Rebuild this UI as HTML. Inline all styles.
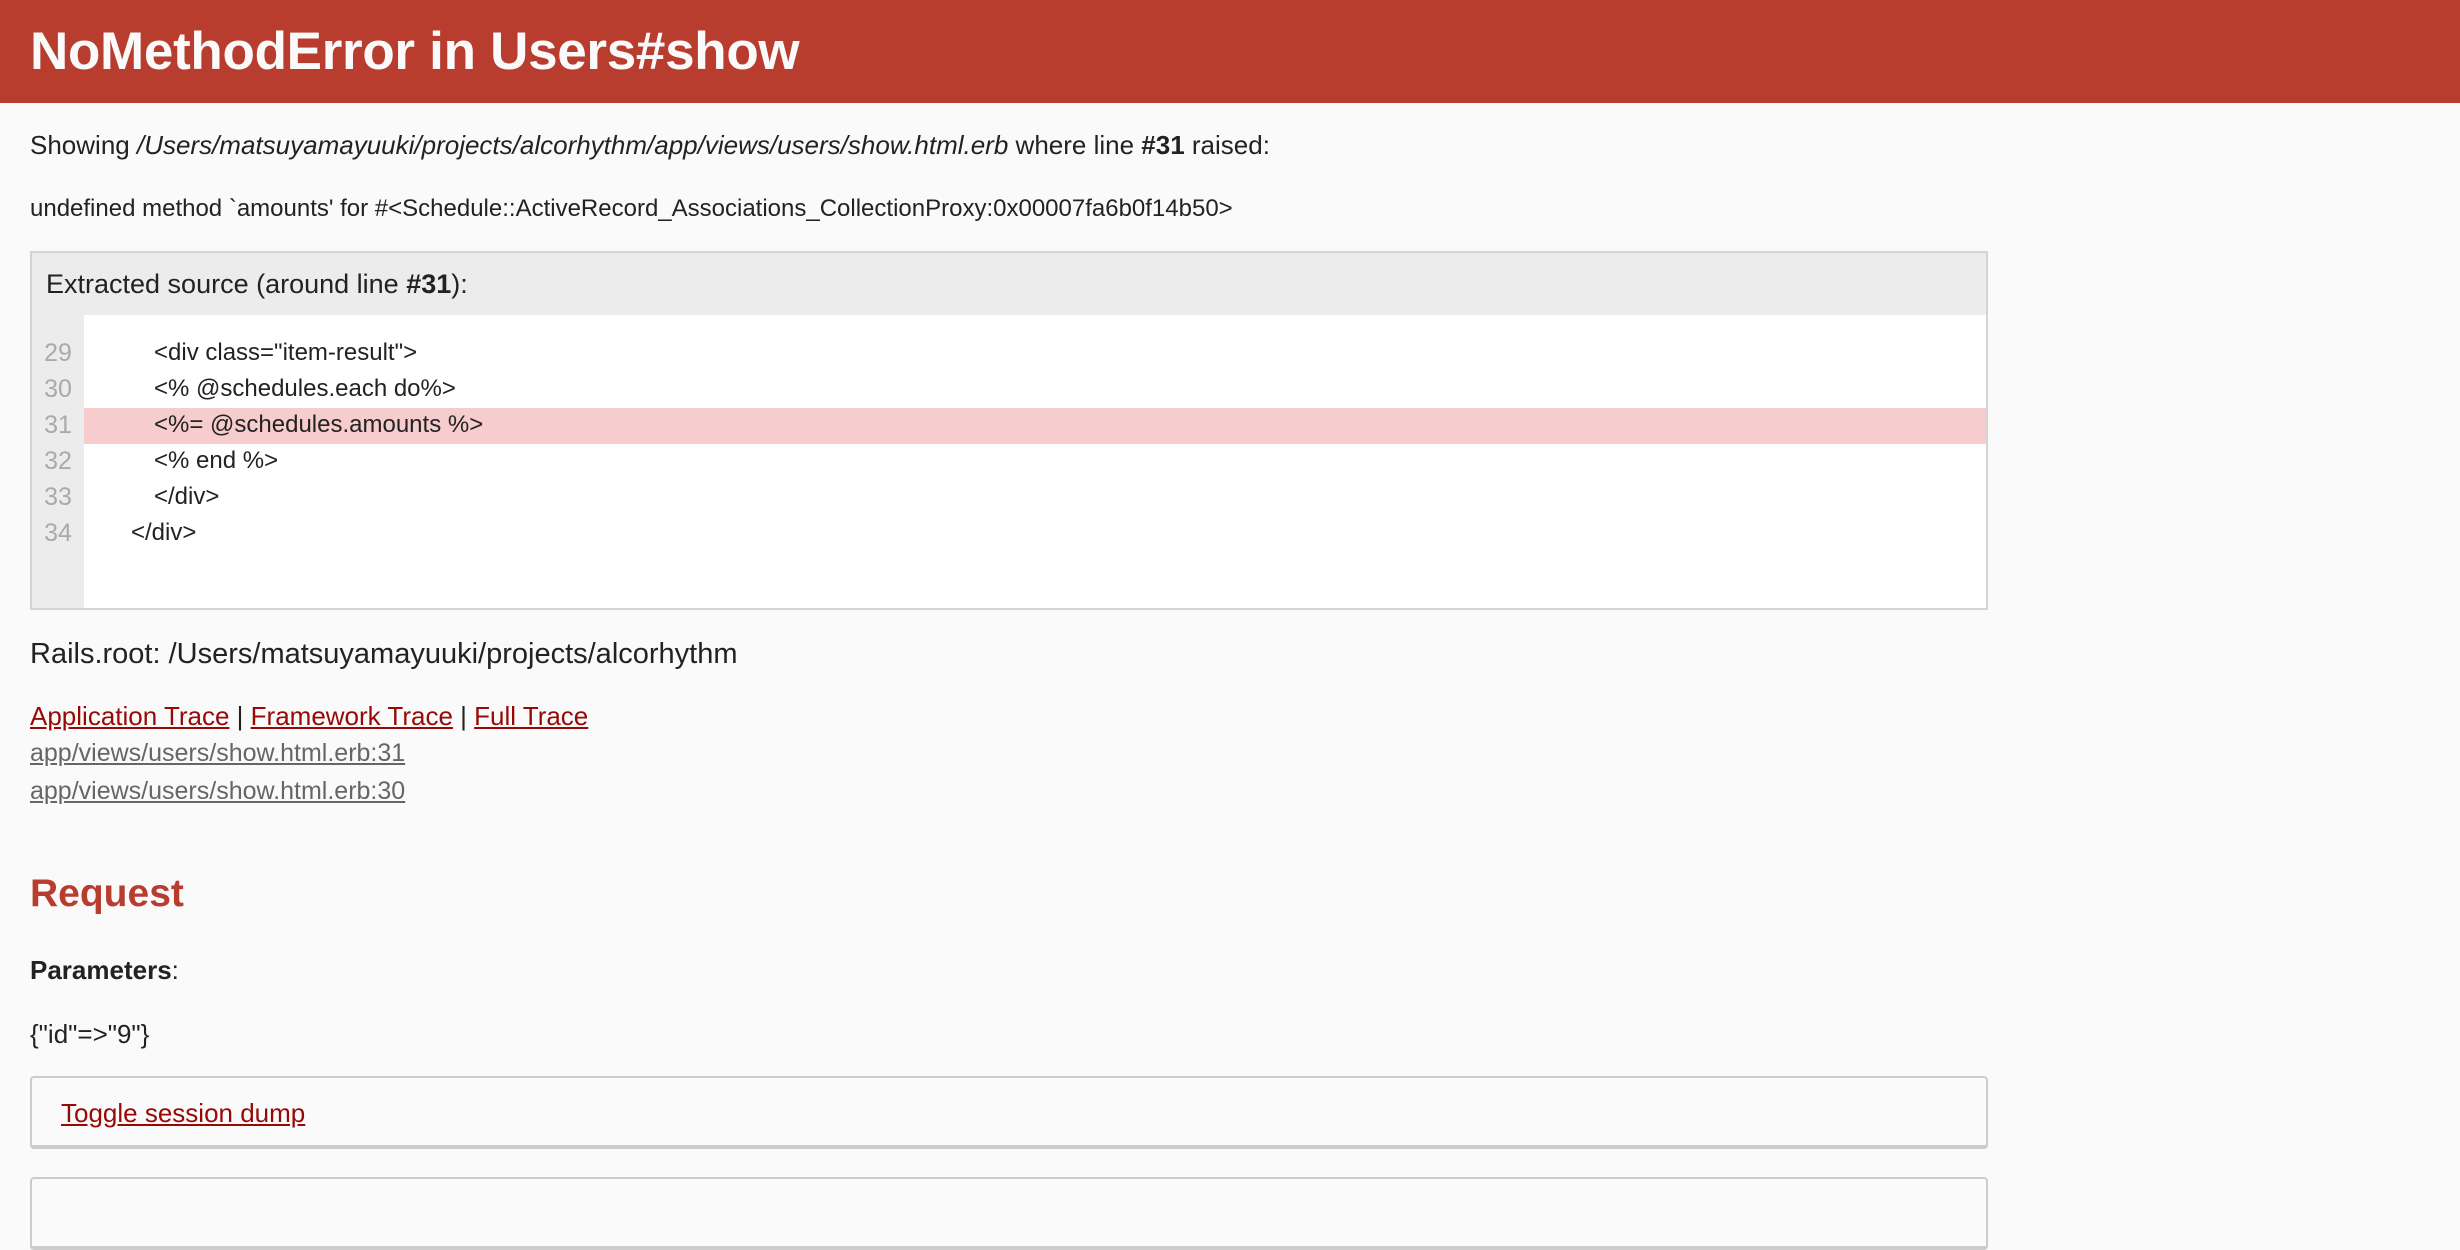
<!DOCTYPE html>
<html><head><meta charset="utf-8"><style>
*{margin:0;padding:0;box-sizing:border-box}
html,body{width:2460px;height:1200px;overflow:hidden;background:#fafafa;font-family:"Liberation Sans",Arial,sans-serif;color:#222}
header{height:103px;background:#b83d2f;color:#fafafa}
header h1{font-size:53px;font-weight:bold;padding-left:30px;line-height:103px;letter-spacing:-0.3px}
.abs{position:absolute;left:30px;white-space:nowrap}
.box{position:absolute;left:30px;top:251px;width:1958px;height:359px;border:2px solid #d4d4d4;background:#fff}
.box .hd{height:62px;background:#ececec;font-size:27px;line-height:62px;padding-left:14px}
.gut{position:absolute;left:0;top:62px;width:52px;bottom:0;background:#ececec}
.ln{position:absolute;left:0;width:52px;text-align:center;color:#aaa;font-size:25px;line-height:36px}
.cl{position:absolute;left:52px;right:0;font-size:24px;line-height:36px;white-space:pre;color:#222}
.hl{background:#f7cccc;height:36px}
a{color:#980905;text-decoration:underline}
.grey{color:#666}
.tog{position:absolute;left:30px;top:1076px;width:1958px;height:73px;border:2px solid #ccc;border-bottom-width:4px;border-radius:4px;background:#fafafa}
</style></head><body>
<header><h1>NoMethodError in Users#show</h1></header>
<div class="abs" style="top:130px;font-size:26px">Showing <i>/Users/matsuyamayuuki/projects/alcorhythm/app/views/users/show.html.erb</i> where line <b>#31</b> raised:</div>
<div class="abs" style="top:195px;font-size:24px">undefined method `amounts' for #&lt;Schedule::ActiveRecord_Associations_CollectionProxy:0x00007fa6b0f14b50&gt;</div>
<div class="box">
<div class="hd">Extracted source (around line <b>#31</b>):</div>
<div class="gut"></div>
</div>
<div style="position:absolute;left:30px;top:251px;width:1958px;height:359px">
<div class="ln" style="top:84px;left:2px">29</div>
<div class="ln" style="top:120px;left:2px">30</div>
<div class="hl" style="position:absolute;top:157px;left:54px;right:2px"></div>
<div class="ln" style="top:156px;left:2px">31</div>
<div class="ln" style="top:192px;left:2px">32</div>
<div class="ln" style="top:228px;left:2px">33</div>
<div class="ln" style="top:264px;left:2px">34</div>
<div class="cl" style="top:84px;left:124px">&lt;div class="item-result"&gt;</div>
<div class="cl" style="top:120px;left:124px">&lt;% @schedules.each do%&gt;</div>
<div class="cl" style="top:156px;left:124px">&lt;%= @schedules.amounts %&gt;</div>
<div class="cl" style="top:192px;left:124px">&lt;% end %&gt;</div>
<div class="cl" style="top:228px;left:124px">&lt;/div&gt;</div>
<div class="cl" style="top:264px;left:101px">&lt;/div&gt;</div>
</div>
<div class="abs" style="top:638px;font-size:29px">Rails.root: /Users/matsuyamayuuki/projects/alcorhythm</div>
<div class="abs" style="top:701px;font-size:26px"><a>Application Trace</a> | <a>Framework Trace</a> | <a>Full Trace</a></div>
<div class="abs" style="top:739px;font-size:25px"><a class="grey">app/views/users/show.html.erb:31</a></div>
<div class="abs" style="top:777px;font-size:25px"><a class="grey">app/views/users/show.html.erb:30</a></div>
<div class="abs" style="top:872px;font-size:39px;font-weight:bold;color:#b83d2f">Request</div>
<div class="abs" style="top:955px;font-size:26px"><b>Parameters</b>:</div>
<div class="abs" style="top:1019px;font-size:26px">{"id"=&gt;"9"}</div>
<div class="tog"><a style="position:absolute;left:29px;top:20px;font-size:26px">Toggle session dump</a></div>
<div class="tog" style="top:1177px"></div>
</body></html>
